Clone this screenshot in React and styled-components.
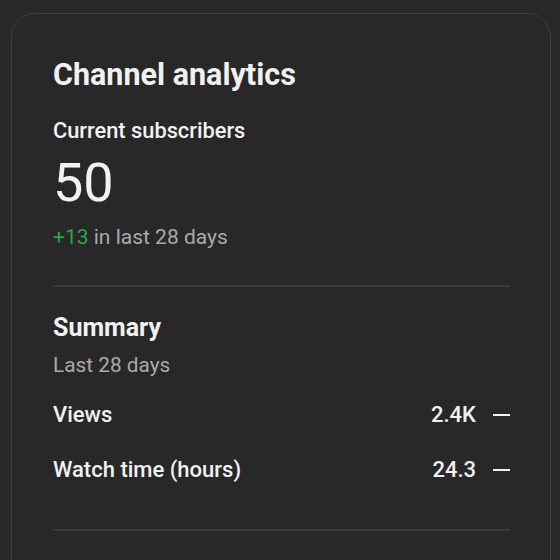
import styled, { createGlobalStyle } from 'styled-components'

const GlobalStyle = createGlobalStyle`
  html, body {
    margin: 0;
    padding: 0;
    background: #282828;
    font-family: Roboto, "Liberation Sans", Arial, sans-serif;
    color: #f1f1f1;
    overflow: hidden;
  }
`

const Page = styled.div`
  width: 560px;
  height: 560px;
  padding: 13px 9px 0 11px;
  box-sizing: border-box;
`

const Card = styled.section`
  box-sizing: border-box;
  width: 540px;
  min-height: 600px;
  border: 1px solid #3e3e3e;
  border-radius: 24px;
  background: #282828;
  padding: 43px 40px 40px 41px;
`

const Title = styled.h2`
  margin: 0;
  font-size: 30.5px;
  line-height: 36px;
  font-weight: 700;
`

const Label = styled.div`
  margin-top: 25px;
  font-size: 21.8px;
  line-height: 26px;
  font-weight: 500;
`

const BigNumber = styled.div`
  margin-top: 11px;
  font-size: 54px;
  line-height: 56px;
  font-weight: 400;
`

const Change = styled.div`
  margin-top: 14px;
  font-size: 21px;
  line-height: 24px;
  color: #aaaaaa;

  span {
    color: #2ba640;
  }
`

const Divider = styled.hr`
  margin: ${p => p.$top || 36}px 0 0;
  border: 0;
  height: 2px;
  background: #3a3a3a;
`

const SectionTitle = styled.h3`
  margin: 26px 0 0;
  font-size: 25px;
  line-height: 30px;
  font-weight: 700;
`

const SubTitle = styled.div`
  margin-top: 10px;
  font-size: 20.8px;
  line-height: 24px;
  color: #aaaaaa;
`

const Rows = styled.div`
  margin-top: 25px;
  display: flex;
  flex-direction: column;
  gap: 29px;
`

const Row = styled.div`
  display: flex;
  align-items: center;
  justify-content: space-between;
  font-size: 22px;
  line-height: 26px;
  font-weight: 500;
`

const Value = styled.div`
  display: flex;
  align-items: center;
  gap: 17px;
`

const Flat = styled.span`
  display: block;
  width: 17px;
  height: 2px;
  background: #f1f1f1;
`

const stats = [
  { label: 'Views', value: '2.4K' },
  { label: 'Watch time (hours)', value: '24.3' },
]

export default function App() {
  return (
    <>
      <GlobalStyle />
      <Page>
        <Card>
          <Title>Channel analytics</Title>
          <Label>Current subscribers</Label>
          <BigNumber>50</BigNumber>
          <Change><span>+13</span> in last 28 days</Change>
          <Divider />
          <SectionTitle>Summary</SectionTitle>
          <SubTitle>Last 28 days</SubTitle>
          <Rows>
            {stats.map(s => (
              <Row key={s.label}>
                <span>{s.label}</span>
                <Value>
                  {s.value}
                  <Flat />
                </Value>
              </Row>
            ))}
          </Rows>
          <Divider $top={46} />
        </Card>
      </Page>
    </>
  )
}
